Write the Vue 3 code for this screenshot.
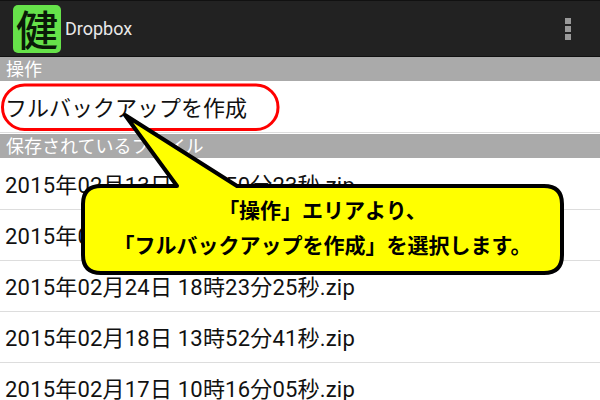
<script setup>
const files = [
  '2015年02月13日 18時50分23秒.zip',
  '2015年02月24日 18時23分25秒.zip',
  '2015年02月24日 18時23分25秒.zip',
  '2015年02月18日 13時52分41秒.zip',
  '2015年02月17日 10時16分05秒.zip'
]
</script>

<template>
  <div class="screen">
    <header class="bar">
      <div class="logo">健</div>
      <div class="title">Dropbox</div>
      <div class="menu"><i></i><i></i><i></i></div>
    </header>
    <div class="section">操作</div>
    <div class="action">フルバックアップを作成</div>
    <div class="section files">保存されているファイル</div>
    <div class="row" v-for="(f, i) in files" :key="i">{{ f }}</div>

    <svg class="marks" width="600" height="400" viewBox="0 0 600 400">
      <rect x="2.5" y="85" width="275.5" height="44.5" rx="22" fill="none" stroke="#f00" stroke-width="3" />
      <path d="M101 186 H177 L125 115 L237 186 H544 Q562 186 562 204 V255 Q562 273 544 273 H101 Q83 273 83 255 V204 Q83 186 101 186 Z" fill="#ff0" stroke="#000" stroke-width="4" stroke-linejoin="round" />
    </svg>
    <div class="note">
      <div>「操作」エリアより、</div>
      <div>「フルバックアップを作成」を選択します。</div>
    </div>
  </div>
</template>

<style>
html, body { margin: 0; background: #fff; overflow: hidden; }
</style>

<style scoped>
.screen {
  position: relative;
  width: 600px;
  height: 400px;
  overflow: hidden;
  background: #fff;
  font-family: Roboto, "Noto Sans CJK JP", sans-serif;
  color: #111;
}
.bar {
  height: 57px;
  box-sizing: border-box;
  border-top: 1px solid #111;
  border-bottom: 1px solid #111;
  background: #222;
  display: flex;
  align-items: center;
  padding-left: 13px;
}
.logo {
  width: 48px;
  height: 48px;
  border-radius: 5px;
  background: #66e24a;
  color: #0a1a08;
  font: 500 42px/46px "Noto Sans CJK JP", sans-serif;
  text-align: center;
  overflow: hidden;
}
.title {
  margin-left: 4px;
  color: #e8e8e8;
  font-size: 18px;
}
.menu {
  margin-left: auto;
  margin-right: 29px;
  display: flex;
  flex-direction: column;
  gap: 2px;
}
.menu i {
  display: block;
  width: 6px;
  height: 6px;
  background: #999;
}
.section {
  height: 24px;
  background: #aaa;
  color: #fff;
  font-size: 18px;
  line-height: 26px;
  padding-left: 6px;
}
.files { margin-top: 1px; margin-bottom: 1px; line-height: 25px; }
.action {
  height: 51px;
  border-bottom: 1px solid #ddd;
  font-size: 22px;
  line-height: 55px;
  padding-left: 5px;
}
.row {
  height: 50px;
  border-bottom: 1px solid #ddd;
  font-size: 22px;
  letter-spacing: 0.2px;
  line-height: 54px;
  padding-left: 5px;
}
.marks {
  position: absolute;
  left: 0;
  top: 0;
}
.note {
  position: absolute;
  left: 83px;
  top: 192px;
  width: 479px;
  text-align: center;
  color: #000;
  font: 700 21px/35px "Noto Sans CJK JP", sans-serif;
}
</style>
